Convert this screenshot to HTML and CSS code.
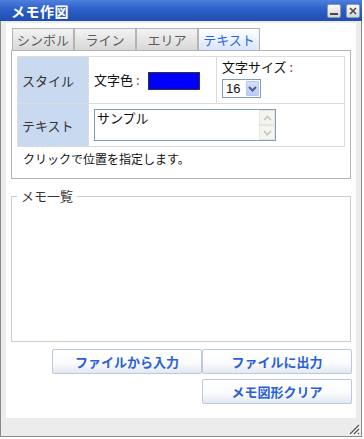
FILE: index.html
```html
<!DOCTYPE html>
<html lang="ja">
<head>
  <meta charset="UTF-8" />
  <title>メモ作図</title>
  <link rel="stylesheet" href="styles.css">
</head>
<body>

  <div class="window">
    <div class="titlebar">
      <span class="title">メモ作図</span>
      <div class="win-buttons">
        <span class="win-btn">
          <svg width="12" height="12" viewBox="0 0 12 12"><rect x="2" y="8" width="8" height="2" fill="#4a4a4a"/></svg>
        </span>
        <span class="win-btn">
          <svg width="12" height="12" viewBox="0 0 12 12"><path d="M3 3 L9 9 M9 3 L3 9" stroke="#4a4a4a" stroke-width="1.6"/></svg>
        </span>
      </div>
    </div>

    <div class="frame">
      <div class="content">

        <!-- タブ -->
        <div class="tabs">
          <div class="tab">シンボル</div>
          <div class="tab">ライン</div>
          <div class="tab">エリア</div>
          <div class="tab active">テキスト</div>
        </div>

        <div class="panel">
          <table class="form">
            <tr class="row-style">
              <th>スタイル</th>
              <td class="color-cell">文字色 <span class="colon">:</span> <span class="swatch"></span></td>
              <td class="size-cell">
                <div>文字サイズ <span class="colon">:</span></div>
                <div class="select">
                  <span class="select-value">16</span>
                  <span class="select-arrow">
                    <svg width="9" height="6" viewBox="0 0 9 6"><path d="M1 1 L4.5 4.5 L8 1" stroke="#4d5f86" stroke-width="2" fill="none"/></svg>
                  </span>
                </div>
              </td>
            </tr>
            <tr class="row-text">
              <th>テキスト</th>
              <td colspan="2">
                <div class="textbox">
                  <span class="textbox-value">サンプル</span>
                  <div class="scroll">
                    <span class="scroll-btn">
                      <svg width="9" height="6" viewBox="0 0 9 6"><path d="M1 5 L4.5 1.5 L8 5" stroke="#c4c4bc" stroke-width="1.6" fill="none"/></svg>
                    </span>
                    <span class="scroll-btn">
                      <svg width="9" height="6" viewBox="0 0 9 6"><path d="M1 1 L4.5 4.5 L8 1" stroke="#c4c4bc" stroke-width="1.6" fill="none"/></svg>
                    </span>
                  </div>
                </div>
              </td>
            </tr>
          </table>
          <p class="hint">クリックで位置を指定します。</p>
        </div>

        <!-- メモ一覧 -->
        <fieldset class="memo-list">
          <legend>メモ一覧</legend>
        </fieldset>

        <div class="actions">
          <div class="action-row">
            <button class="btn">ファイルから入力</button>
            <button class="btn">ファイルに出力</button>
          </div>
          <div class="action-row">
            <button class="btn">メモ図形クリア</button>
          </div>
        </div>

      </div>
      <div class="statusbar">
        <svg class="grip" width="11" height="11" viewBox="0 0 11 11">
          <path d="M10 1 L1 10 M10 5 L5 10 M10 9 L9 10" stroke="#555" stroke-width="1.2"/>
          <path d="M11 2 L2 11 M11 6 L6 11" stroke="#fff" stroke-width="1"/>
        </svg>
      </div>
    </div>
  </div>

</body>
</html>
```

FILE: styles.css
```css
body {
  margin: 0;
  background: #fff;
  font-family: "Noto Sans CJK JP", sans-serif;
  font-size: 12px;
  color: #111;
}

.window {
  width: 362px;
  height: 437px;
  display: flex;
  flex-direction: column;
}

/* タイトルバー */
.titlebar {
  height: 21px;
  flex: none;
  display: flex;
  justify-content: space-between;
  align-items: center;
  padding: 0 2px 0 11px;
  background: linear-gradient(#4f80de, #2c5fc8 45%, #1f4db2);
}

.title {
  color: #fff;
  font-weight: bold;
  font-size: 14px;
  letter-spacing: 0.5px;
}

.win-buttons {
  display: flex;
  gap: 5px;
  padding-top: 1px;
}

.win-btn {
  width: 14px;
  height: 14px;
  box-sizing: border-box;
  display: flex;
  align-items: center;
  justify-content: center;
  border: 1px solid #8d9bb3;
  border-radius: 2px;
  background: linear-gradient(#fafafa, #d6d6d6);
}

.frame {
  flex: 1;
  display: flex;
  flex-direction: column;
  border: 1px solid #8a8a8a;
  border-top: none;
  padding: 2px 5px 0;
  background: #ececec;
}

.content {
  height: 395px;
  box-sizing: border-box;
  background: #fff;
  padding: 5px 5px 0;
}

/* タブ */
.tabs {
  display: flex;
  padding-left: 1px;
}

.tab {
  width: 62px;
  height: 22px;
  box-sizing: border-box;
  border: 1px solid #b4b4b4;
  border-bottom: none;
  background: linear-gradient(#f3f3f3, #d8d8d8);
  color: #5c5c5c;
  font-size: 13px;
  line-height: 21px;
  text-align: center;
}

.tab.active {
  background: linear-gradient(#fff, #d9e5fc);
  color: #2b66d9;
}

.panel {
  border: 1px solid #b4b4b4;
  padding: 5px 5px 9px;
}

.form {
  width: 100%;
  border-collapse: collapse;
}

.form th,
.form td {
  border: 1px solid #dcdcdc;
  padding: 0 0 0 5px;
  font-weight: normal;
  text-align: left;
}

.form th {
  width: 66px;
  background: #c9d9f0;
  color: #333;
  font-size: 13px;
  padding-left: 4px;
}

.row-style {
  height: 47px;
}

.row-text td {
  padding-top: 5px;
  padding-bottom: 5px;
}

.color-cell {
  width: 122px;
  font-size: 13px;
}

.colon {
  color: #b03030;
}

.swatch {
  display: inline-block;
  width: 50px;
  height: 16px;
  margin-left: 6px;
  vertical-align: middle;
  background: #0000ff;
  border: 1px solid #333;
}

.size-cell {
  font-size: 13px;
  line-height: 18px;
  vertical-align: top;
  padding-top: 1px !important;
}

.select {
  width: 39px;
  height: 19px;
  box-sizing: border-box;
  margin-top: 3px;
  display: flex;
  align-items: center;
  justify-content: space-between;
  border: 1px solid #7f9db9;
  padding: 0 1px 0 3px;
  font-family: "Liberation Sans", sans-serif;
  font-size: 13px;
}

.select-arrow {
  width: 13px;
  height: 15px;
  box-sizing: border-box;
  display: flex;
  align-items: center;
  justify-content: center;
  background: linear-gradient(#d4e0fd, #b9cbfa);
  border: 1px solid #b4c6f4;
  border-radius: 1px;
}

.textbox {
  width: 182px;
  height: 32px;
  box-sizing: border-box;
  display: flex;
  justify-content: space-between;
  border: 1px solid #7f9db9;
  padding: 0 0 0 2px;
  font-size: 13px;
  line-height: 16px;
}

.scroll {
  display: flex;
  flex-direction: column;
  width: 16px;
}

.scroll-btn {
  height: 15px;
  display: flex;
  align-items: center;
  justify-content: center;
  background: #f5f5f0;
  border: 1px solid #e6e6de;
  box-sizing: border-box;
}

.hint {
  margin: 2px 0 0 6px;
  line-height: 20px;
  font-size: 12px;
}

/* メモ一覧 */
.memo-list {
  margin: 9px 0 0;
  padding: 0;
  height: 154px;
  box-sizing: border-box;
  border: 1px solid #cdcdcd;
}

.memo-list legend {
  margin-left: 5px;
  padding: 0 4px;
  color: #333;
  font-size: 13px;
  line-height: 16px;
}

.actions {
  margin: 7px -1px 0 0;
  display: flex;
  flex-direction: column;
  align-items: flex-end;
  gap: 5px;
}

.action-row {
  display: flex;
}

.btn {
  width: 150px;
  height: 25px;
  border: 1px solid #bcc8dc;
  border-radius: 2px;
  background: linear-gradient(#fff, #fbfcfe 55%, #e3e8f1);
  color: #2a5fd6;
  font-family: "Noto Sans CJK JP", sans-serif;
  font-weight: bold;
  font-size: 13px;
  padding: 0;
  cursor: pointer;
}

.statusbar {
  flex: 1;
  display: flex;
  justify-content: flex-end;
  align-items: flex-end;
  padding: 0 0 1px;
  margin-right: -4px;
}
```
